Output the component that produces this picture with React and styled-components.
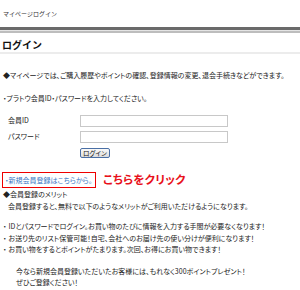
import styled, { createGlobalStyle } from 'styled-components';

const Global = createGlobalStyle`
  body {
    margin: 0;
    background: #fff;
    font-family: "Noto Sans CJK JP", "Noto Sans", sans-serif;
    color: #222;
    font-size: 7px;
  }
`;

const Page = styled.div`
  width: 300px;
  height: 290px;
  overflow: hidden;
`;

const Crumb = styled.div`
  padding: 9px 0 0 3px;
  height: 18px;
  font-size: 6px;
  color: #333;
`;

const Bar = styled.div`
  height: 1px;
  background: #e4e4e4;
  border-top: 3px solid #6a6a6a;
  border-bottom: 2px solid #bdbdbd;
`;

const Title = styled.h1`
  margin: 0;
  padding: 4px 0 0 2px;
  height: 15px;
  font-size: 10px;
  font-weight: 700;
  color: #111;
  border-bottom: 2px solid #ececec;
`;

const Body = styled.div`
  padding: 0 0 0 3px;
  line-height: 11.5px;
  font-feature-settings: "palt";
`;

const Para = styled.p`
  margin: ${p => p.$mt || 0}px 0 0 ${p => p.$indent || 0}px;
`;

const Form = styled.div`
  display: grid;
  grid-template-columns: 72px 148px;
  row-gap: 4px;
  margin: 11px 0 0 5px;
  align-items: center;
`;

const Label = styled.label`
  font-size: 7px;
`;

const Input = styled.input`
  box-sizing: border-box;
  width: 148px;
  height: 12px;
  border: 1px solid #c8c8c8;
  margin: 0;
  padding: 0;
`;

const Button = styled.button`
  grid-column: 2;
  justify-self: start;
  margin-top: 1px;
  width: 30px;
  height: 10px;
  padding: 0;
  font: inherit;
  font-size: 6.5px;
  line-height: 8px;
  color: #111;
  background: linear-gradient(#fafafa, #dcdcdc);
  border: 1px solid #4a6fa5;
  border-radius: 2px;
`;

const RegisterRow = styled.div`
  display: flex;
  align-items: center;
  gap: 7px;
  margin: 14px 0 0 -1px;
`;

const RegisterBox = styled.a`
  display: inline-block;
  box-sizing: border-box;
  width: 94px;
  height: 16px;
  padding: 0 0 0 2px;
  line-height: 14px;
  border: 1px solid #e00;
  color: #3b78c4;
  text-decoration: none;
  font-size: 7px;
`;

const ClickHere = styled.span`
  color: #e8101a;
  font-weight: 700;
  font-size: 11.5px;
  letter-spacing: 0.2px;
`;

const List = styled.ul`
  list-style: none;
  margin: 9px 0 0 0;
  padding: 0;
`;

const Item = styled.li`
  &::before {
    content: "・";
    margin-right: 2px;
  }
`;

const App = () => {
  return (
    <Page>
      <Global />
      <Crumb>マイページログイン</Crumb>
      <Bar />
      <Title>ログイン</Title>
      <Body>
        <Para $mt={16}>◆マイページでは、ご購入履歴やポイントの確認、登録情報の変更、退会手続きなどができます。</Para>
        <Para $mt={11}>・プラトウ会員ID・パスワードを入力してください。</Para>
        <Form>
          <Label>会員ID</Label>
          <Input type="text" />
          <Label>パスワード</Label>
          <Input type="password" />
          <Button>ログイン</Button>
        </Form>
        <RegisterRow>
          <RegisterBox href="#">・新規会員登録はこちらから。</RegisterBox>
          <ClickHere>こちらをクリック</ClickHere>
        </RegisterRow>
        <Para $mt={1}>◆会員登録のメリット</Para>
        <Para $indent={5}>会員登録すると、無料で以下のようなメリットがご利用いただけるようになります。</Para>
        <List>
          <Item>IDとパスワードでログイン。お買い物のたびに情報を入力する手間が必要なくなります！</Item>
          <Item>お送り先のリスト保管可能！自宅、会社へのお届け先の使い分けが便利になります！</Item>
          <Item>お買い物をするとポイントがたまります。次回、お得にお買い物できます！</Item>
        </List>
        <Para $mt={10} $indent={13}>今なら新規会員登録いただいたお客様には、もれなく300ポイントプレゼント！<br />ぜひご登録ください！</Para>
      </Body>
    </Page>
  );
};

export default App;
